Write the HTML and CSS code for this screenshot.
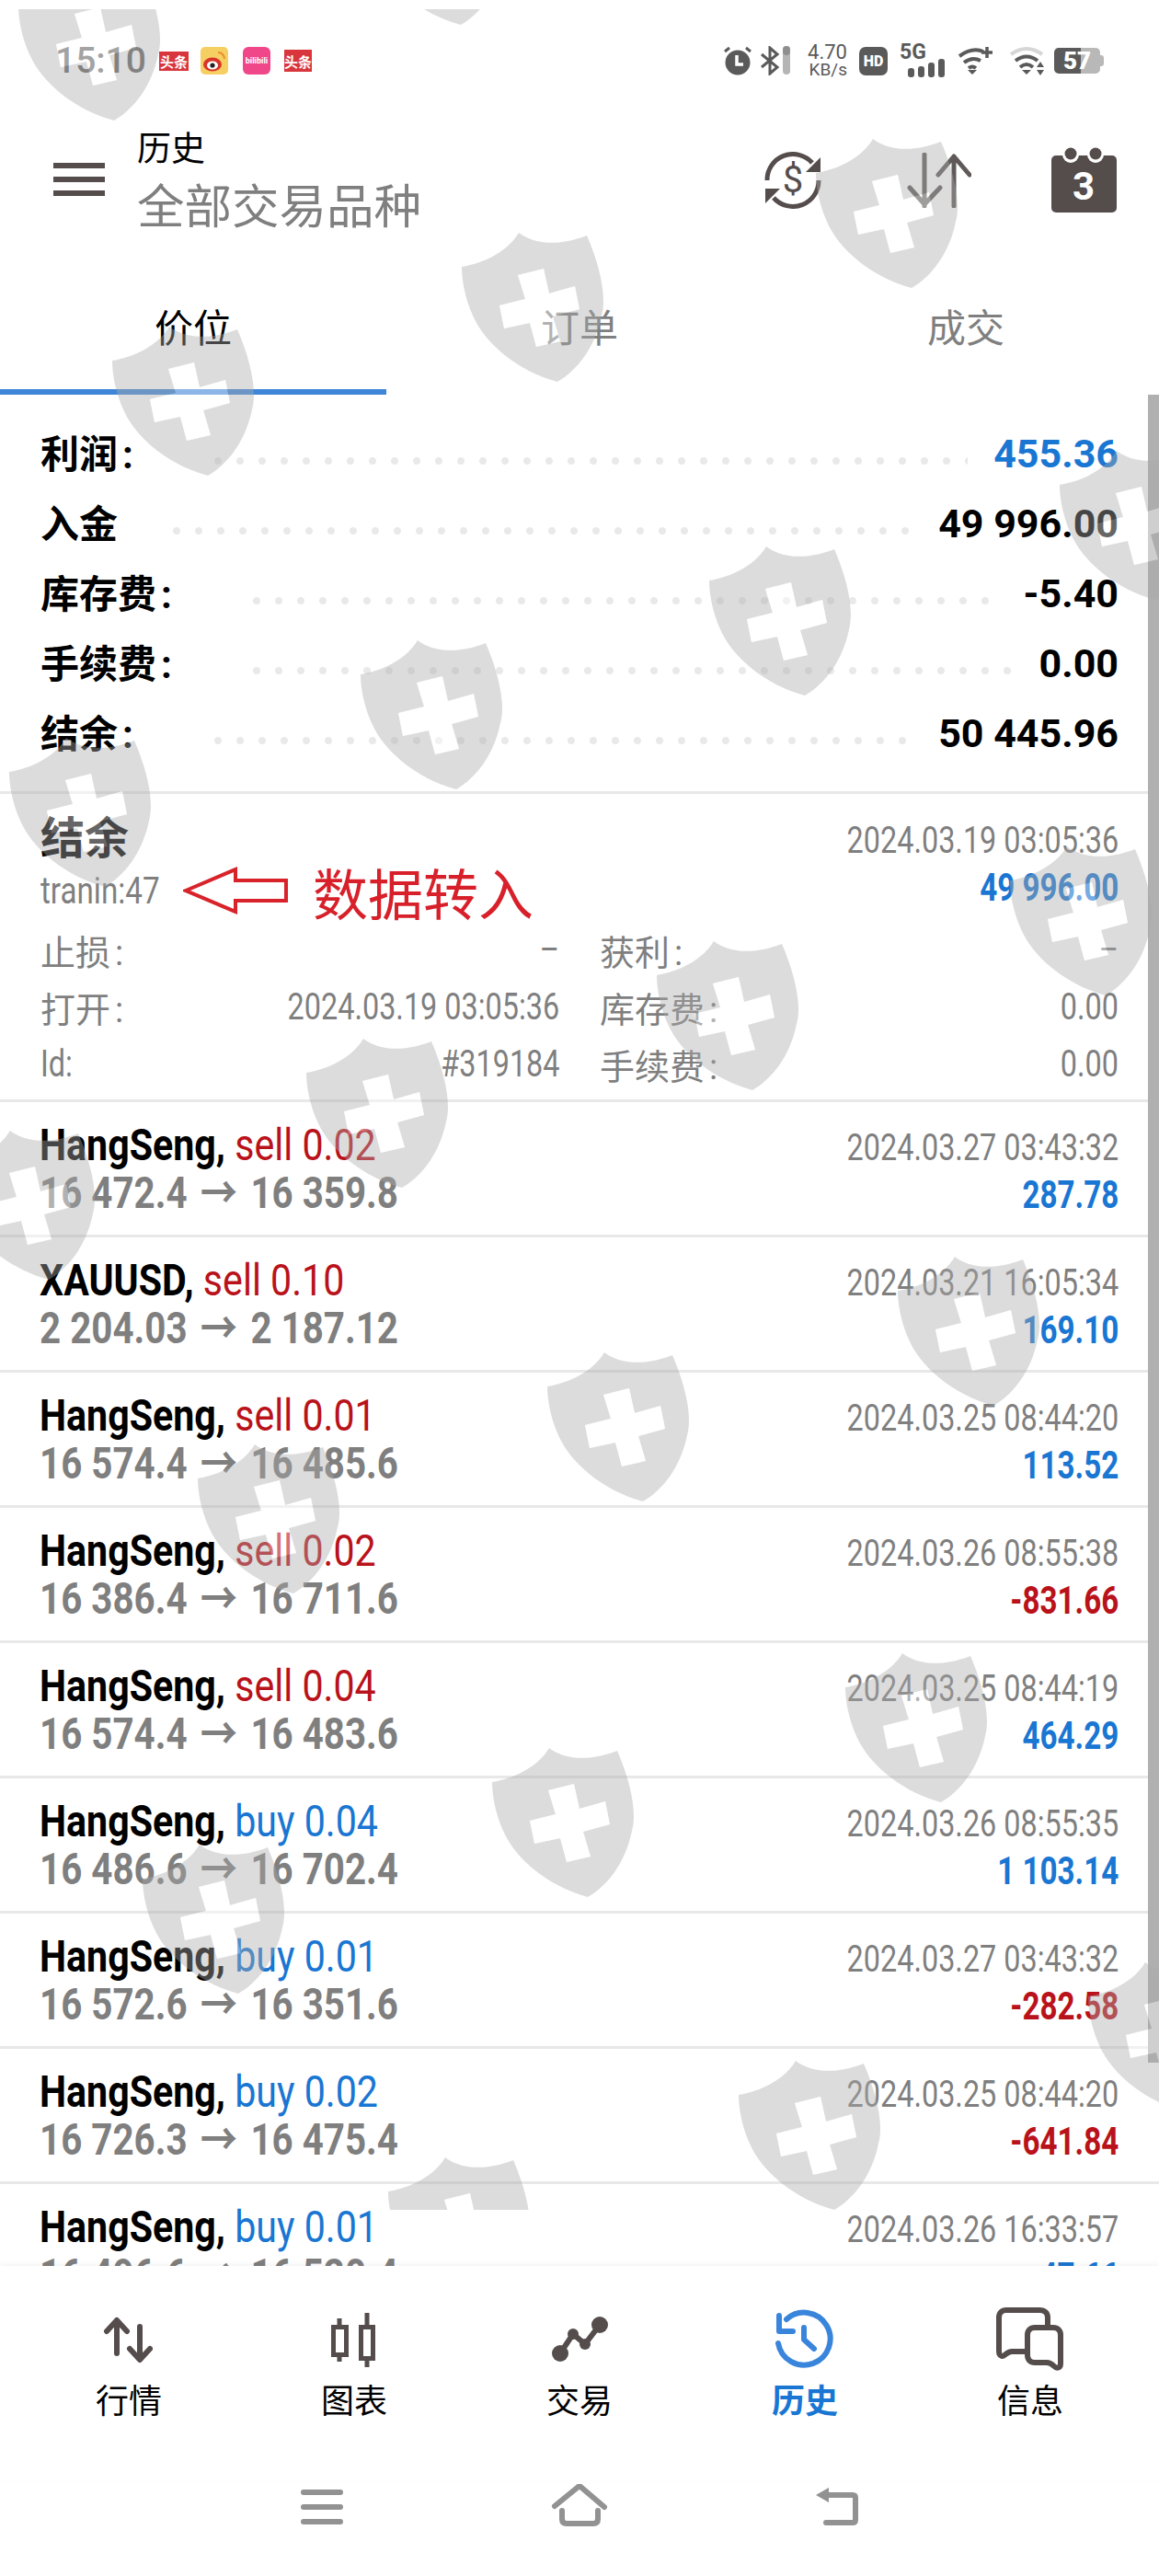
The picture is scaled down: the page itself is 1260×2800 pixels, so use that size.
FILE: index.html
```html
<!DOCTYPE html>
<html lang="zh-CN">
<head>
    <meta charset="UTF-8">
    <meta name="viewport" content="width=device-width, initial-scale=1.0">
    <title>历史</title>
    <link rel="stylesheet" href="styles.css">
</head>
<body>

<div id="phone">

    <div class="status">
        <span class="time">15:10</span>
        <span class="app app-toutiao">头条</span>
        <svg class="app-icon" width="30" height="30" viewBox="0 0 30 30">
            <rect width="30" height="30" rx="5" fill="#f6cf63"/>
            <ellipse cx="13" cy="19" rx="10" ry="7.5" fill="#d8352a"/>
            <ellipse cx="13" cy="20" rx="6" ry="4.5" fill="#fff"/>
            <circle cx="13" cy="20" r="2.6" fill="#222"/>
            <path d="M19 6 A7 7 0 0 1 26 13" fill="none" stroke="#e8902a" stroke-width="2"/>
        </svg>
        <span class="app app-bili">bilibili</span>
        <span class="app app-toutiao app-toutiao2">头条</span>
        <div class="status-right">
            <svg width="30" height="32" viewBox="0 0 30 32">
                <circle cx="15" cy="18" r="13.5" fill="#5a5a5a"/>
                <path d="M14 10 V20 H21" fill="none" stroke="#fff" stroke-width="3.5"/>
                <path d="M1 6 L6 2 M29 6 L24 2" stroke="#5a5a5a" stroke-width="3"/>
            </svg>
            <svg class="bt" width="34" height="32" viewBox="0 0 34 32">
                <path d="M2 9 L19 23 L11 30 V2 L19 9 L2 23" fill="none" stroke="#5a5a5a" stroke-width="3"/>
                <rect x="25" y="0" width="8" height="31" rx="4" fill="#b5b5b5"/>
                <rect x="25" y="0" width="8" height="10" rx="4" fill="#8f8f8f"/>
            </svg>
            <div class="speed"><span>4.70</span><span class="speed-unit">KB/s</span></div>
            <span class="hd">HD</span>
            <div class="net">
                <span class="net-label">5G</span>
                <svg width="42" height="20" viewBox="0 0 42 20">
                    <rect x="0" y="10" width="7" height="10" rx="3" fill="#5a5a5a"/>
                    <rect x="11" y="8" width="7" height="12" rx="3" fill="#5a5a5a"/>
                    <rect x="22" y="4" width="7" height="16" rx="3" fill="#5a5a5a"/>
                    <rect x="33" y="0" width="7" height="20" rx="3" fill="#5a5a5a"/>
                </svg>
            </div>
            <svg class="wifi" width="38" height="32" viewBox="0 0 38 32">
                <path d="M1 11 Q15 1 27 6 M6 18 Q15 11 24 16 M11 24 Q15 21 19 24" fill="none" stroke="#5a5a5a" stroke-width="4"/>
                <path d="M15 31 L10 26 H20 Z" fill="#5a5a5a"/>
                <path d="M31 1 V13 M25 7 H37" stroke="#5a5a5a" stroke-width="3.5"/>
            </svg>
            <svg class="wifi2" width="38" height="32" viewBox="0 0 38 32">
                <path d="M1 9 Q18 -3 35 9" fill="none" stroke="#d6d6d6" stroke-width="4"/>
                <path d="M6 16 Q18 7 30 16 M11 23 Q18 17 25 23" fill="none" stroke="#5a5a5a" stroke-width="4"/>
                <path d="M18 31 L13 26 H23 Z" fill="#5a5a5a"/>
                <path d="M33 17 L29 23 H37 Z M33 32 L29 26 H37 Z" fill="#5a5a5a"/>
            </svg>
            <div class="battery"><span class="battery-level">57</span><span class="battery-nub"></span></div>
        </div>
    </div>

    <div class="header">
        <div class="menu"><span></span><span></span><span></span></div>
        <div class="titles">
            <div class="title">历史</div>
            <div class="subtitle">全部交易品种</div>
        </div>
        <div class="actions">
            <svg width="62" height="62" viewBox="0 0 62 62">
                <path d="M3 31 A28 28 0 0 1 52 12 M59 31 A28 28 0 0 1 10 50" fill="none" stroke="#544d4c" stroke-width="5"/>
                <path d="M61 6 V22 H45 Z M1 56 V40 H17 Z" fill="#544d4c"/>
                <text x="31" y="44" text-anchor="middle" class="dollar">$</text>
            </svg>
            <svg class="sort-icon" width="70" height="60" viewBox="0 0 70 60">
                <path d="M19 2 V58 M3 38 L19 56 L36 38 M51 58 V4 M34 24 L51 4 L68 24" fill="none" stroke="#5f5a59" stroke-width="5" stroke-linecap="round" stroke-linejoin="round"/>
            </svg>
            <svg width="71" height="74" viewBox="0 0 71 74">
                <rect x="0" y="10" width="71" height="62" rx="5" fill="#544d4c"/>
                <circle cx="21" cy="9" r="9" fill="#fff"/>
                <circle cx="48" cy="9" r="9" fill="#fff"/>
                <circle cx="21" cy="8" r="6.5" fill="#544d4c"/>
                <circle cx="48" cy="8" r="6.5" fill="#544d4c"/>
                <text x="35" y="58" text-anchor="middle" class="cal-day">3</text>
            </svg>
        </div>
    </div>

    <div class="tabs">
        <div class="tab tab-active">价位</div>
        <div class="tab">订单</div>
        <div class="tab">成交</div>
    </div>

    <div class="content">
        <div class="scrollbar"></div>

        <div class="summary">
            <div class="sum-row"><span class="sum-label">利润<span class="colon">:</span></span><span class="dots"></span><span class="sum-value blue">455.36</span></div>
            <div class="sum-row"><span class="sum-label">入金</span><span class="dots dots-short"></span><span class="sum-value">49 996.00</span></div>
            <div class="sum-row"><span class="sum-label">库存费<span class="colon">:</span></span><span class="dots"></span><span class="sum-value">-5.40</span></div>
            <div class="sum-row"><span class="sum-label">手续费<span class="colon">:</span></span><span class="dots"></span><span class="sum-value">0.00</span></div>
            <div class="sum-row"><span class="sum-label">结余<span class="colon">:</span></span><span class="dots"></span><span class="sum-value">50 445.96</span></div>
        </div>

        <div class="detail">
            <div class="detail-head">
                <div>
                    <div class="detail-title">结余</div>
                    <div class="detail-note">
                        <span class="note-id">tranin:47</span>
                        <svg class="note-arrow" width="116" height="52" viewBox="0 0 116 52">
                            <path d="M3 26 L57 3 V15 H112 V37 H57 V49 Z" fill="none" stroke="#d8232a" stroke-width="4"/>
                        </svg>
                        <span class="note-text">数据转入</span>
                    </div>
                </div>
                <div class="side">
                    <div class="date">2024.03.19 03:05:36</div>
                    <div class="amount blue">49 996.00</div>
                </div>
            </div>
            <div class="detail-grid">
                <div class="pair"><span class="pair-label">止损<span class="colon">:</span></span><span class="pair-value">–</span></div>
                <div class="pair"><span class="pair-label">获利<span class="colon">:</span></span><span class="pair-value">–</span></div>
                <div class="pair"><span class="pair-label">打开<span class="colon">:</span></span><span class="pair-value">2024.03.19 03:05:36</span></div>
                <div class="pair"><span class="pair-label">库存费<span class="colon">:</span></span><span class="pair-value">0.00</span></div>
                <div class="pair"><span class="pair-label narrow-label">Id:</span><span class="pair-value">#319184</span></div>
                <div class="pair"><span class="pair-label">手续费<span class="colon">:</span></span><span class="pair-value">0.00</span></div>
            </div>
        </div>

        <div class="row">
            <div class="main"><div class="deal"><b>HangSeng,</b> <span class="red">sell 0.02</span></div><div class="prices">16 472.4<span class="to">→</span>16 359.8</div></div>
            <div class="side"><div class="date">2024.03.27 03:43:32</div><div class="amount blue">287.78</div></div>
        </div>
        <div class="row">
            <div class="main"><div class="deal"><b>XAUUSD,</b> <span class="red">sell 0.10</span></div><div class="prices">2 204.03<span class="to">→</span>2 187.12</div></div>
            <div class="side"><div class="date">2024.03.21 16:05:34</div><div class="amount blue">169.10</div></div>
        </div>
        <div class="row">
            <div class="main"><div class="deal"><b>HangSeng,</b> <span class="red">sell 0.01</span></div><div class="prices">16 574.4<span class="to">→</span>16 485.6</div></div>
            <div class="side"><div class="date">2024.03.25 08:44:20</div><div class="amount blue">113.52</div></div>
        </div>
        <div class="row">
            <div class="main"><div class="deal"><b>HangSeng,</b> <span class="red">sell 0.02</span></div><div class="prices">16 386.4<span class="to">→</span>16 711.6</div></div>
            <div class="side"><div class="date">2024.03.26 08:55:38</div><div class="amount red">-831.66</div></div>
        </div>
        <div class="row">
            <div class="main"><div class="deal"><b>HangSeng,</b> <span class="red">sell 0.04</span></div><div class="prices">16 574.4<span class="to">→</span>16 483.6</div></div>
            <div class="side"><div class="date">2024.03.25 08:44:19</div><div class="amount blue">464.29</div></div>
        </div>
        <div class="row">
            <div class="main"><div class="deal"><b>HangSeng,</b> <span class="blue">buy 0.04</span></div><div class="prices">16 486.6<span class="to">→</span>16 702.4</div></div>
            <div class="side"><div class="date">2024.03.26 08:55:35</div><div class="amount blue">1 103.14</div></div>
        </div>
        <div class="row">
            <div class="main"><div class="deal"><b>HangSeng,</b> <span class="blue">buy 0.01</span></div><div class="prices">16 572.6<span class="to">→</span>16 351.6</div></div>
            <div class="side"><div class="date">2024.03.27 03:43:32</div><div class="amount red">-282.58</div></div>
        </div>
        <div class="row">
            <div class="main"><div class="deal"><b>HangSeng,</b> <span class="blue">buy 0.02</span></div><div class="prices">16 726.3<span class="to">→</span>16 475.4</div></div>
            <div class="side"><div class="date">2024.03.25 08:44:20</div><div class="amount red">-641.84</div></div>
        </div>
        <div class="row">
            <div class="main"><div class="deal"><b>HangSeng,</b> <span class="blue">buy 0.01</span></div><div class="prices">16 496.6<span class="to">→</span>16 520.4</div></div>
            <div class="side"><div class="date">2024.03.26 16:33:57</div><div class="amount blue">47.66</div></div>
        </div>
    </div>

    <div class="bottom-nav">
        <div class="nav-item">
            <svg width="80" height="72" viewBox="0 0 80 72">
                <path d="M27 52 V17 M16 28 L27 16 L38 28 M52 23 V58 M41 47 L52 59 L63 47" fill="none" stroke="#544d4c" stroke-width="6" stroke-linecap="round" stroke-linejoin="round"/>
            </svg>
            <span>行情</span>
        </div>
        <div class="nav-item">
            <svg width="80" height="72" viewBox="0 0 80 72">
                <path d="M24 14 V61 M54 8 V67" stroke="#544d4c" stroke-width="5"/>
                <rect x="17.5" y="23.5" width="14" height="30" fill="#fff" stroke="#544d4c" stroke-width="5"/>
                <rect x="47.5" y="23.5" width="13" height="34" fill="#fff" stroke="#544d4c" stroke-width="5"/>
            </svg>
            <span>图表</span>
        </div>
        <div class="nav-item">
            <svg width="80" height="72" viewBox="0 0 80 72">
                <path d="M19 52 L33 31 L46 42 L62 21" fill="none" stroke="#544d4c" stroke-width="6"/>
                <circle cx="19" cy="52" r="9" fill="#544d4c"/>
                <circle cx="33" cy="31" r="6" fill="#544d4c"/>
                <circle cx="46" cy="42" r="6" fill="#544d4c"/>
                <circle cx="62" cy="21" r="9" fill="#544d4c"/>
            </svg>
            <span>交易</span>
        </div>
        <div class="nav-item nav-active">
            <svg width="80" height="72" viewBox="0 0 80 72">
                <path d="M11 41 A28.5 28.5 0 1 0 20 15 M12 11 V28 H27 M39 24 V37 L50 47" fill="none" stroke="#3a85dc" stroke-width="6" stroke-linecap="round" stroke-linejoin="round"/>
            </svg>
            <span>历史</span>
        </div>
        <div class="nav-item">
            <svg width="80" height="72" viewBox="0 0 80 72">
                <path d="M34 50 H20 C14 50 12 56 9 55 C6 54 6 52 6 48 V13 C6 8 9 5 14 5 H50 C56 5 59 8 59 13 V24" fill="none" stroke="#544d4c" stroke-width="6"/>
                <path d="M45 24 H65 C70 24 73 27 73 32 V63 C73 68 69 69 66 66 C64 64 62 62 58 62 H45 C40 62 37 59 37 54 V32 C37 27 40 24 45 24 Z" fill="none" stroke="#544d4c" stroke-width="6"/>
            </svg>
            <span>信息</span>
        </div>
    </div>

    <div class="system-nav">
        <div class="sys-menu"><span></span><span></span><span></span></div>
        <svg width="64" height="50" viewBox="0 0 64 50">
            <path d="M5 24 L32 2 L59 25 M13 29 V38 Q13 43 18 43 H47 Q52 43 52 38 V29" fill="none" stroke="#929292" stroke-width="6" stroke-linecap="round" stroke-linejoin="round"/>
        </svg>
        <svg width="64" height="50" viewBox="0 0 64 50">
            <path d="M9 12 L23 4 V20 Z" fill="#929292"/>
            <path d="M18 12 H49 Q52 12 52 15 V39 Q52 42 49 42 H20" fill="none" stroke="#929292" stroke-width="6" stroke-linecap="round"/>
        </svg>
    </div>

    <!-- watermark shields, they lie over everything above the bottom nav -->
    <svg class="watermark" width="1260" height="2392" viewBox="0 10 1260 2392">
        <defs>
            <g id="shield">
                <path fill-rule="evenodd" fill="rgba(170,170,170,0.41)" d="M62 0 C75 10 100 17 136 3 C150 35 158 70 152 90 C145 125 125 150 104 162 C60 150 25 120 12 90 C3 70 0 50 0 37 C25 33 50 20 62 0 Z M61 46 L89 39 L95 66 L123 58 L128 83 L99 91 L107 118 L81 124 L74 98 L46 104 L41 79 L69 72 Z"/>
                <path fill="rgba(255,255,255,0.4)" d="M61 46 L89 39 L95 66 L123 58 L128 83 L99 91 L107 118 L81 124 L74 98 L46 104 L41 79 L69 72 Z"/>
            </g>
        </defs>
        <use href="#shield" x="20" y="-31"/>
        <use href="#shield" x="397" y="-135"/>
        <use href="#shield" x="887" y="151"/>
        <use href="#shield" x="502" y="253"/>
        <use href="#shield" x="122" y="355"/>
        <use href="#shield" x="1152" y="490"/>
        <use href="#shield" x="771" y="594"/>
        <use href="#shield" x="392" y="696"/>
        <use href="#shield" x="10" y="802"/>
        <use href="#shield" x="1098" y="920"/>
        <use href="#shield" x="714" y="1023"/>
        <use href="#shield" x="333" y="1129"/>
        <use href="#shield" x="-51" y="1229"/>
        <use href="#shield" x="976" y="1366"/>
        <use href="#shield" x="595" y="1470"/>
        <use href="#shield" x="215" y="1570"/>
        <use href="#shield" x="919" y="1797"/>
        <use href="#shield" x="535" y="1900"/>
        <use href="#shield" x="155" y="2005"/>
        <use href="#shield" x="1183" y="2133"/>
        <use href="#shield" x="803" y="2240"/>
        <use href="#shield" x="422" y="2345"/>
    </svg>

</div>

</body>
</html>
```

FILE: styles.css
```css
* {
    box-sizing: border-box;
}

body {
    margin: 0;
    background: #fff;
    font-family: Roboto, "Noto Sans CJK SC", sans-serif;
    color: #000;
}

#phone {
    position: relative;
    display: flex;
    flex-direction: column;
    width: 1260px;
    height: 2800px;
    overflow: hidden;
}

.blue {
    color: #1976d2;
}

.red {
    color: #b9121b;
}

.colon {
    margin-left: 5px;
}

/* status bar */

.status {
    display: flex;
    align-items: center;
    height: 100px;
    padding: 32px 60px 0 60px;
    color: #666;
}

.time {
    width: 113px;
    font-size: 39px;
    font-weight: 500;
}

.app {
    display: flex;
    align-items: center;
    justify-content: center;
    overflow: hidden;
    white-space: nowrap;
    color: #fff;
}

.app-toutiao {
    width: 32px;
    height: 21px;
    background: #d8363c;
    font-size: 15px;
    font-weight: 700;
}

.app-toutiao2 {
    width: 30px;
    height: 24px;
    margin-left: 15px;
}

.app-icon {
    margin-left: 13px;
}

.app-bili {
    width: 30px;
    height: 30px;
    margin-left: 16px;
    border-radius: 6px;
    background: #f0478a;
    font-size: 9px;
    font-weight: 700;
}

.status-right {
    display: flex;
    align-items: center;
    margin-left: auto;
}

.bt {
    margin-left: 9px;
}

.speed {
    display: flex;
    flex-direction: column;
    align-items: flex-end;
    width: 48px;
    margin-left: 13px;
    font-size: 22px;
    line-height: 19px;
    color: #5a5a5a;
}

.speed-unit {
    font-size: 19px;
}

.hd {
    width: 31px;
    height: 31px;
    margin-left: 13px;
    border-radius: 7px;
    background: #5a5a5a;
    color: #fff;
    font-size: 16px;
    font-weight: 900;
    line-height: 31px;
    text-align: center;
}

.net {
    display: flex;
    flex-direction: column;
    width: 52px;
    margin-left: 13px;
    color: #5a5a5a;
}

.net-label {
    font-size: 23px;
    font-weight: 700;
    line-height: 15px;
}

.net svg {
    margin-left: 9px;
}

.wifi {
    margin-left: 12px;
}

.wifi2 {
    margin-left: 18px;
}

.battery {
    display: flex;
    align-items: center;
    margin-left: 10px;
}

.battery-level {
    width: 50px;
    height: 28px;
    border-radius: 5px;
    background: linear-gradient(to right, #5a5a5a 58%, #b8b8b8 58%);
    color: #fff;
    font-size: 26px;
    font-weight: 900;
    line-height: 28px;
    text-align: center;
}

.battery-nub {
    width: 4px;
    height: 12px;
    border-radius: 0 3px 3px 0;
    background: #b8b8b8;
}

/* header */

.header {
    display: flex;
    align-items: center;
    height: 132px;
    margin-top: 30px;
    padding: 0 46px 0 58px;
}

.menu {
    display: flex;
    flex-direction: column;
    gap: 9px;
    width: 56px;
    margin-top: -2px;
}

.menu span {
    height: 6px;
    background: #544d4c;
}

.titles {
    margin-left: 35px;
}

.title {
    font-size: 37px;
    line-height: 58px;
}

.subtitle {
    font-size: 51.5px;
    line-height: 67px;
    color: #7f7f7f;
}

.actions {
    display: flex;
    align-items: center;
    margin-left: auto;
}

.sort-icon {
    margin: 0 87px 0 93px;
}

.dollar {
    font-family: Roboto, sans-serif;
    font-size: 40px;
    fill: #544d4c;
}

.cal-day {
    font-family: Roboto, sans-serif;
    font-size: 42px;
    font-weight: 700;
    fill: #fff;
}

/* tabs */

.tabs {
    display: grid;
    grid-template-columns: repeat(3, 1fr);
    height: 167px;
}

.tab {
    padding-top: 68px;
    border-bottom: 6px solid transparent;
    color: #7f7f7f;
    font-size: 42px;
    line-height: 56px;
    text-align: center;
}

.tab-active {
    border-bottom-color: #3f86d8;
    color: #000;
}

/* scrolling part */

.content {
    position: relative;
    flex: 1;
    overflow: hidden;
}

.scrollbar {
    position: absolute;
    top: 0;
    right: 0;
    width: 12px;
    height: 1813px;
    background: #b0b0b0;
}

.summary {
    padding: 26px 44px 25px;
    border-bottom: 3px solid #e8e8e8;
}

.sum-row {
    display: flex;
    align-items: center;
    height: 76px;
}

.sum-label {
    margin-bottom: 6px;
    font-size: 42px;
    font-weight: 700;
}

.dots {
    flex: 1;
    height: 8px;
    margin: 16px 28px 0 80px;
    background: radial-gradient(circle, #e9e9e9 3.5px, transparent 4.5px) left center / 24px 8px repeat-x;
}

.dots-short {
    margin-left: 52px;
}

.sum-value {
    font-size: 43px;
    font-weight: 700;
}

.detail {
    height: 335px;
    padding: 0 44px;
    border-bottom: 3px solid #e8e8e8;
}

.detail-head {
    display: flex;
    justify-content: space-between;
    height: 138px;
    padding-top: 22px;
}

.detail-title {
    font-size: 48px;
    font-weight: 700;
    line-height: 53px;
}

.detail-note {
    display: flex;
    align-items: center;
    height: 60px;
}

.note-id {
    width: 155px;
    color: #7f7f7f;
    font-size: 41px;
    white-space: nowrap;
    transform: scaleX(0.81);
    transform-origin: left center;
}

.note-text {
    margin-left: 25px;
    color: #d8202a;
    font-size: 60px;
}

.detail-grid {
    display: grid;
    grid-template-columns: 1fr 1fr;
    column-gap: 44px;
    grid-auto-rows: 62px;
}

.pair {
    display: flex;
    align-items: center;
    justify-content: space-between;
    color: #7f7f7f;
}

.pair-label {
    font-size: 38px;
}

.narrow-label {
    font-size: 41px;
    transform: scaleX(0.79);
    transform-origin: left center;
}

.pair-value {
    font-size: 41px;
    white-space: nowrap;
    transform: scaleX(0.79);
    transform-origin: right center;
}

/* deals list */

.row {
    display: flex;
    justify-content: space-between;
    height: 147px;
    padding: 21px 44px 0 43px;
    border-bottom: 3px solid #e8e8e8;
}

.main {
    transform: scaleX(0.84);
    transform-origin: left top;
}

.deal,
.prices,
.date,
.amount {
    white-space: nowrap;
}

.deal {
    font-size: 49px;
    line-height: 52px;
}

.deal b {
    font-weight: 700;
}

.prices {
    color: #7f7f7f;
    font-size: 48px;
    font-weight: 700;
    line-height: 52px;
}

.to {
    margin: 0 17px;
}

.side {
    display: flex;
    flex-direction: column;
    align-items: flex-end;
    padding-top: 3px;
    transform: scaleX(0.79);
    transform-origin: right top;
}

.date {
    color: #7f7f7f;
    font-size: 41px;
    line-height: 50px;
}

.amount {
    font-size: 42px;
    font-weight: 700;
    line-height: 54px;
}

/* bottom */

.bottom-nav {
    position: relative;
    display: grid;
    grid-template-columns: repeat(5, 245px);
    justify-content: center;
    height: 233px;
    padding-top: 43px;
    background: #fff;
    box-shadow: 0 -2px 6px rgba(0, 0, 0, 0.05);
}

.nav-item {
    display: flex;
    flex-direction: column;
    align-items: center;
    font-size: 36px;
    line-height: 50px;
}

.nav-item svg {
    margin-bottom: 8px;
}

.nav-active {
    color: #1976d2;
    font-weight: 700;
}

.system-nav {
    display: grid;
    grid-template-columns: repeat(3, 280px);
    justify-content: center;
    justify-items: center;
    align-items: center;
    height: 104px;
    padding-bottom: 46px;
    background: #fff;
}

.sys-menu {
    display: flex;
    flex-direction: column;
    gap: 10px;
    width: 46px;
}

.sys-menu span {
    height: 6px;
    border-radius: 3px;
    background: #929292;
}

.watermark {
    position: absolute;
    top: 10px;
    left: 0;
    pointer-events: none;
}
```
